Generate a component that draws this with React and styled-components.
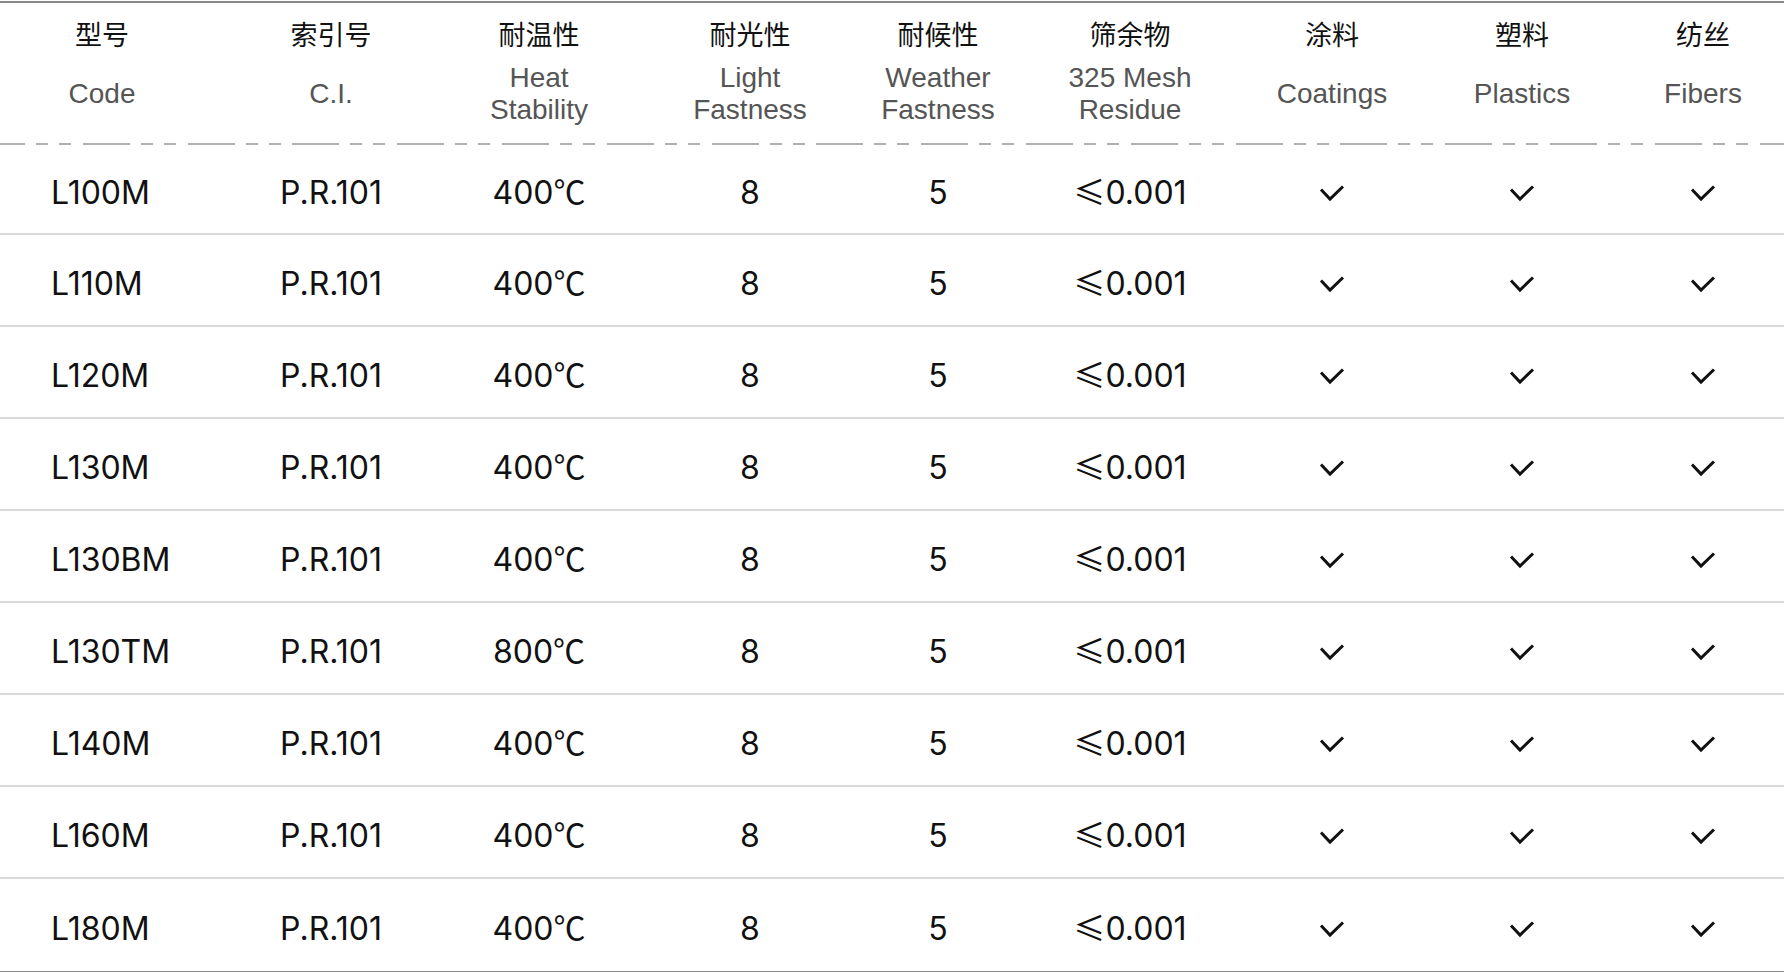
import React from "react";
import styled, { createGlobalStyle } from "styled-components";

const GlobalStyle = createGlobalStyle`
  html, body {
    margin: 0;
    padding: 0;
    background: #fff;
  }
  body {
    font-family: Inter, "Noto Sans CJK SC", sans-serif;
    color: #111;
  }
`;

const COLS = "204px 254px 162px 260px 116px 268px 136px 244px 118px";

const Table = styled.div`
  margin-top: 1px;
  width: 1784px;
  border-top: 2px solid #888;
  border-bottom: 2px solid #8a8a8a;
  box-sizing: border-box;
`;

const HeadRow = styled.div`
  display: grid;
  grid-template-columns: ${COLS};
  height: 140px;
  box-sizing: border-box;
  padding-top: 11px;
`;

const HeadCell = styled.div`
  display: flex;
  flex-direction: column;
  align-items: center;
  text-align: center;
`;

const HeadCn = styled.div`
  height: 40px;
  line-height: 40px;
  font-family: "Noto Sans CJK SC", sans-serif;
  font-size: 27px;
  color: #111;
`;

const HeadEn = styled.div`
  margin-top: 8px;
  height: 64px;
  display: flex;
  align-items: center;
  font-family: "Liberation Sans", Arial, sans-serif;
  font-size: 28px;
  line-height: 32px;
  color: #555;
`;

const Dashed = styled.div`
  height: 2px;
  background-image: repeating-linear-gradient(
    to right,
    #b0b0b0 0 47px,
    transparent 47px 58px,
    #b0b0b0 58px 70px,
    transparent 70px 81px,
    #b0b0b0 81px 93px,
    transparent 93px 104.8px
  );
  background-position: -22px 0;
`;

const Row = styled.div`
  display: grid;
  grid-template-columns: ${COLS};
  align-items: center;
  height: ${(p) => (p.$first ? 90 : 92)}px;
  box-sizing: border-box;
  padding-top: 7px;
  border-bottom: ${(p) => (p.$last ? "none" : "2px solid #dadada")};
`;

const Cell = styled.div`
  text-align: ${(p) => (p.$left ? "left" : "center")};
  padding-left: ${(p) => (p.$left ? "51px" : "0")};
  font-size: 32px;
  line-height: 40px;
  height: 40px;
  color: #111;
  white-space: nowrap;
`;

const Sym = styled.span`
  font-family: "Noto Sans CJK SC", sans-serif;
  line-height: 1;
`;

const CheckBox = styled.div`
  display: flex;
  justify-content: center;
  align-items: center;
`;

const Check = () => (
  <CheckBox>
    <svg width="26" height="18" viewBox="0 0 26 18" fill="none">
      <path d="M2 5.5 L11 15 L24 2.5" stroke="#111" strokeWidth="3" strokeLinecap="butt" strokeLinejoin="miter" />
    </svg>
  </CheckBox>
);

const headers = [
  ["型号", "Code"],
  ["索引号", "C.I."],
  ["耐温性", "Heat\nStability"],
  ["耐光性", "Light\nFastness"],
  ["耐候性", "Weather\nFastness"],
  ["筛余物", "325 Mesh\nResidue"],
  ["涂料", "Coatings"],
  ["塑料", "Plastics"],
  ["纺丝", "Fibers"],
];

const rows = [
  ["L100M", "400"],
  ["L110M", "400"],
  ["L120M", "400"],
  ["L130M", "400"],
  ["L130BM", "400"],
  ["L130TM", "800"],
  ["L140M", "400"],
  ["L160M", "400"],
  ["L180M", "400"],
];

export default function App() {
  return (
    <>
      <GlobalStyle />
      <Table>
        <HeadRow>
          {headers.map(([cn, en]) => (
            <HeadCell key={cn}>
              <HeadCn>{cn}</HeadCn>
              <HeadEn>
                <span>
                  {en.split("\n").map((l, i) => (
                    <React.Fragment key={i}>
                      {i > 0 && <br />}
                      {l}
                    </React.Fragment>
                  ))}
                </span>
              </HeadEn>
            </HeadCell>
          ))}
        </HeadRow>
        <Dashed />
        {rows.map(([code, heat], i) => (
          <Row key={code} $first={i === 0} $last={i === rows.length - 1}>
            <Cell $left>{code}</Cell>
            <Cell>P.R.101</Cell>
            <Cell>
              {heat}
              <Sym>℃</Sym>
            </Cell>
            <Cell>8</Cell>
            <Cell>5</Cell>
            <Cell>
              <Sym>≤</Sym>0.001
            </Cell>
            <Check />
            <Check />
            <Check />
          </Row>
        ))}
      </Table>
    </>
  );
}
